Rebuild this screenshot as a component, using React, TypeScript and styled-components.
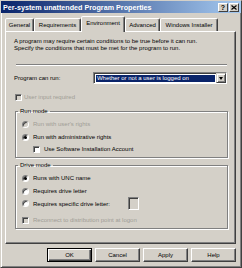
import React from "react";
import styled, { createGlobalStyle } from "styled-components";

const GlobalStyle = createGlobalStyle`
  html, body {
    margin: 0;
    padding: 0;
    background: #d4d0c8;
  }
  body {
    font-family: "Liberation Sans", Arial, sans-serif;
    font-size: 6px;
    color: #000;
  }
  * {
    box-sizing: border-box;
  }
`;

const tabs = [
  { label: "General", width: 29 },
  { label: "Requirements", width: 47 },
  { label: "Environment", width: 44, active: true },
  { label: "Advanced", width: 35 },
  { label: "Windows Installer", width: 58 },
];

const App = () => {
  return (
    <>
      <GlobalStyle />
      <Window>
        <TitleBar>
          <TitleText>Per-system unattended Program Properties</TitleText>
          <TitleButtons>
            <TitleButton>?</TitleButton>
            <TitleButton>
              <svg width="6" height="5" viewBox="0 0 6 5">
                <path d="M0.5 0.5 L5.5 4.5 M5.5 0.5 L0.5 4.5" stroke="#000" strokeWidth="1.2" />
              </svg>
            </TitleButton>
          </TitleButtons>
        </TitleBar>

        <TabStrip>
          {tabs.map((t) => (
            <Tab key={t.label} $width={t.width} $active={!!t.active}>
              {t.label}
            </Tab>
          ))}
        </TabStrip>

        <Panel>
          <Intro>
            A program may require certain conditions to be true before it can run.
            <br />
            Specify the conditions that must be met for the program to run.
          </Intro>
          <Separator />

          <RunRow>
            <RunLabel>Program can run:</RunLabel>
            <Select>
              <SelectValue>Whether or not a user is logged on</SelectValue>
              <DropButton>
                <Arrow />
              </DropButton>
            </Select>
          </RunRow>

          <OptionRow $top={9} $indent={1} $gap={2} $disabled>
            <CheckBox $disabled />
            User input required
          </OptionRow>

          <Group $top={6}>
            <Legend>Run mode</Legend>
            <OptionRow $top={5} $disabled>
              <Radio $disabled />
              Run with user's rights
            </OptionRow>
            <OptionRow $top={5}>
              <Radio $checked />
              Run with administrative rights
            </OptionRow>
            <OptionRow $top={4} $indent={11}>
              <CheckBox />
              Use Software Installation Account
            </OptionRow>
          </Group>

          <Group $top={3}>
            <Legend>Drive mode</Legend>
            <OptionRow $top={5}>
              <Radio $checked />
              Runs with UNC name
            </OptionRow>
            <OptionRow $top={5}>
              <Radio />
              Requires drive letter
            </OptionRow>
            <OptionRow $top={2} $height={13}>
              <Radio />
              <LetterLabel>Requires specific drive letter:</LetterLabel>
              <LetterBox />
            </OptionRow>
            <OptionRow $top={6} $disabled>
              <CheckBox $disabled />
              Reconnect to distribution point at logon
            </OptionRow>
          </Group>
        </Panel>

        <ButtonBar>
          <Button $default>OK</Button>
          <Button>Cancel</Button>
          <Button>Apply</Button>
          <Button>Help</Button>
        </ButtonBar>
      </Window>
    </>
  );
};

export default App;

const Window = styled.div`
  width: 242px;
  height: 268px;
  background: #d4d0c8;
  border: 1px solid;
  border-color: #d4d0c8 #404040 #404040 #d4d0c8;
  box-shadow: inset 1px 1px 0 #fff, inset -1px -1px 0 #808080;
  display: flex;
  flex-direction: column;
`;

const TitleBar = styled.div`
  height: 12px;
  display: flex;
  align-items: center;
  justify-content: space-between;
  padding: 0 2px 0 2px;
  background: linear-gradient(to right, #0a246a, #a6caf0);
  color: #fff;
`;

const TitleText = styled.span`
  font-size: 7.2px;
  font-weight: bold;
  white-space: nowrap;
`;

const TitleButtons = styled.div`
  display: flex;
  gap: 1px;
`;

const TitleButton = styled.div`
  width: 10px;
  height: 9px;
  display: flex;
  align-items: center;
  justify-content: center;
  background: #d4d0c8;
  border: 1px solid;
  border-color: #fff #404040 #404040 #fff;
  color: #000;
  font-size: 7px;
  font-weight: bold;
  line-height: 1;
`;

const TabStrip = styled.div`
  display: flex;
  align-items: flex-end;
  height: 19px;
  padding-left: 4px;
  margin-bottom: -1px;
  position: relative;
  z-index: 1;
`;

const Tab = styled.div<{ $width: number; $active: boolean }>`
  width: ${(p) => p.$width}px;
  height: ${(p) => (p.$active ? 16 : 13)}px;
  padding-bottom: ${(p) => (p.$active ? 3 : 0)}px;
  display: flex;
  align-items: center;
  justify-content: center;
  background: #d4d0c8;
  border: 1px solid;
  border-bottom: none;
  border-color: #fff #404040 transparent #fff;
  box-shadow: inset -1px 0 0 #808080;
  border-radius: 2px 2px 0 0;
  white-space: nowrap;
  margin-bottom: ${(p) => (p.$active ? 0 : 1)}px;
`;

const Panel = styled.div`
  height: 213px;
  margin: 0 5px 0 4px;
  padding: 6px 8px 0 8px;
  border: 1px solid;
  border-color: #fff #404040 #404040 #fff;
  box-shadow: inset -1px -1px 0 #808080;
  display: flex;
  flex-direction: column;
`;

const Intro = styled.div`
  line-height: 7px;
`;

const Separator = styled.div`
  height: 2px;
  margin: 12px 0 0 2px;
  border-top: 1px solid #808080;
  border-bottom: 1px solid #fff;
`;

const RunRow = styled.div`
  display: flex;
  align-items: center;
  height: 12px;
  margin-top: 6px;
`;

const RunLabel = styled.span`
  width: 80px;
`;

const Select = styled.div`
  width: 136px;
  height: 12px;
  display: flex;
  align-items: stretch;
  background: #fff;
  border: 1px solid;
  border-color: #808080 #fff #fff #808080;
  box-shadow: inset 1px 1px 0 #404040;
`;

const SelectValue = styled.div`
  flex: 1;
  margin: 2px 1px 1px 2px;
  padding-left: 1px;
  background: #0a246a;
  color: #fff;
  line-height: 7px;
  white-space: nowrap;
`;

const DropButton = styled.div`
  width: 10px;
  display: flex;
  align-items: center;
  justify-content: center;
  background: #d4d0c8;
  border: 1px solid;
  border-color: #d4d0c8 #404040 #404040 #d4d0c8;
  box-shadow: inset 1px 1px 0 #fff, inset -1px -1px 0 #808080;
`;

const Arrow = styled.span`
  width: 0;
  height: 0;
  border-left: 2.5px solid transparent;
  border-right: 2.5px solid transparent;
  border-top: 3px solid #000;
`;

const OptionRow = styled.div<{
  $top: number;
  $indent?: number;
  $gap?: number;
  $height?: number;
  $disabled?: boolean;
}>`
  display: flex;
  align-items: center;
  gap: ${(p) => p.$gap ?? 4}px;
  height: ${(p) => p.$height ?? 8}px;
  margin-top: ${(p) => p.$top}px;
  margin-left: ${(p) => p.$indent ?? 0}px;
  color: ${(p) => (p.$disabled ? "#a09d96" : "#000")};
  white-space: nowrap;
`;

const CheckBox = styled.span<{ $disabled?: boolean }>`
  width: 7px;
  height: 7px;
  flex: none;
  background: ${(p) => (p.$disabled ? "#d4d0c8" : "#fff")};
  border: 1px solid;
  border-color: #808080 #fff #fff #808080;
  box-shadow: inset 1px 1px 0 #404040;
`;

const Radio = styled.span<{ $checked?: boolean; $disabled?: boolean }>`
  width: 7px;
  height: 7px;
  flex: none;
  display: flex;
  align-items: center;
  justify-content: center;
  border-radius: 50%;
  background: ${(p) => (p.$disabled ? "#d4d0c8" : "#fff")};
  border: 1px solid;
  border-color: #808080 #fff #fff #808080;
  box-shadow: inset 1px 1px 0 #404040;
  &::after {
    content: "";
    display: ${(p) => (p.$checked ? "block" : "none")};
    width: 3px;
    height: 3px;
    border-radius: 50%;
    background: #000;
  }
`;

const Group = styled.fieldset<{ $top: number }>`
  margin: ${(p) => p.$top}px -1px 0 1px;
  padding: 0 0 4px 6px;
  border: 1px solid #808080;
  box-shadow: 1px 1px 0 #fff, inset 1px 1px 0 #fff;
  display: flex;
  flex-direction: column;
  min-width: 0;
`;

const Legend = styled.legend`
  margin-left: -4px;
  padding: 0 2px;
  line-height: 8px;
`;

const LetterLabel = styled.span`
  width: 91px;
`;

const LetterBox = styled.span`
  width: 11px;
  height: 13px;
  background: #d4d0c8;
  border: 1px solid;
  border-color: #808080 #fff #fff #808080;
  box-shadow: inset 1px 1px 0 #404040;
`;

const ButtonBar = styled.div`
  display: flex;
  justify-content: flex-end;
  gap: 3px;
  margin-top: 4px;
  padding-right: 5px;
`;

const Button = styled.div<{ $default?: boolean }>`
  width: 45px;
  height: 14px;
  display: flex;
  align-items: center;
  justify-content: center;
  background: #d4d0c8;
  border: 1px solid;
  border-color: ${(p) => (p.$default ? "#000" : "#fff #404040 #404040 #fff")};
  box-shadow: ${(p) =>
    p.$default
      ? "inset 1px 1px 0 #fff, inset -1px -1px 0 #404040, inset -2px -2px 0 #808080"
      : "inset -1px -1px 0 #808080"};
`;
